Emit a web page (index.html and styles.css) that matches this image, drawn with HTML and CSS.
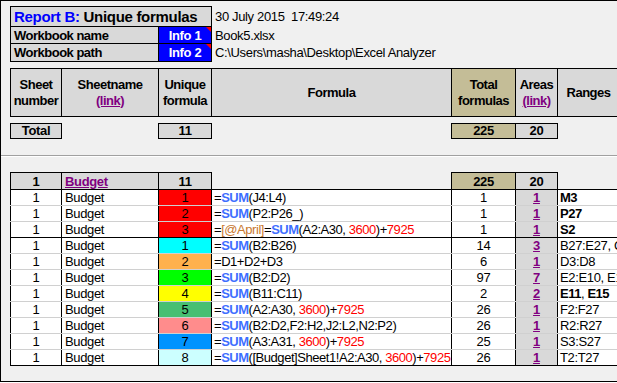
FILE: index.html
```html
<!DOCTYPE html>
<html lang="en">
  <head>
    <meta charset="UTF-8" />
    <link rel="stylesheet" href="styles.css">
  </head>
  <body>
    <div class="sheet">
      <table class="info">
        <colgroup>
          <col class="c-label" />
          <col class="c-info" />
          <col class="c-rest" />
        </colgroup>
        <tr class="row-title">
          <td class="title" colspan="2"><span class="report">Report B:</span> Unique formulas</td>
          <td class="plain">30 July 2015&nbsp; 17:49:24</td>
        </tr>
        <tr class="row-name">
          <td class="label">Workbook name</td>
          <td class="tag">Info 1<span class="note"></span></td>
          <td class="plain">Book5.xlsx</td>
        </tr>
        <tr class="row-path">
          <td class="label">Workbook path</td>
          <td class="tag">Info 2<span class="note"></span></td>
          <td class="plain">C:\Users\masha\Desktop\Excel Analyzer</td>
        </tr>
      </table>

      <table class="grid head">
        <colgroup>
          <col class="c1" /><col class="c2" /><col class="c3" /><col class="c4" /><col class="c5" /><col class="c6" /><col class="c7" />
        </colgroup>
        <tr>
          <td>Sheet<br />number</td>
          <td>Sheetname<br /><a href="#">(link)</a></td>
          <td>Unique<br />formula</td>
          <td>Formula</td>
          <td class="tan">Total<br />formulas</td>
          <td>Areas<br /><a href="#">(link)</a></td>
          <td>Ranges</td>
        </tr>
      </table>

      <table class="grid totals">
        <colgroup>
          <col class="c1" /><col class="c2" /><col class="c3" /><col class="c4" /><col class="c5" /><col class="c6" /><col class="c7" />
        </colgroup>
        <tr>
          <td class="box">Total</td>
          <td></td>
          <td class="box">11</td>
          <td></td>
          <td class="box tan">225</td>
          <td class="box">20</td>
          <td></td>
        </tr>
      </table>

      <div class="split"></div>

      <table class="grid data">
        <colgroup>
          <col class="c1" /><col class="c2" /><col class="c3" /><col class="c4" /><col class="c5" /><col class="c6" /><col class="c7" />
        </colgroup>
        <tr class="group">
          <td class="box">1</td>
          <td class="box name"><a href="#">Budget</a></td>
          <td class="box">11</td>
          <td class="open"></td>
          <td class="box tan">225</td>
          <td class="box">20</td>
          <td class="open last"></td>
        </tr>
        <tr>
          <td>1</td><td class="name">Budget</td><td class="u red">1</td>
          <td class="f">=<b class="fn">SUM</b>(J4:L4)</td>
          <td>1</td><td class="area"><a href="#">1</a></td><td class="rng"><b>M3</b></td>
        </tr>
        <tr>
          <td>1</td><td class="name">Budget</td><td class="u red">2</td>
          <td class="f">=<b class="fn">SUM</b>(P2:P26_)</td>
          <td>1</td><td class="area"><a href="#">1</a></td><td class="rng"><b>P27</b></td>
        </tr>
        <tr class="end">
          <td>1</td><td class="name">Budget</td><td class="u red">3</td>
          <td class="f">=<span class="col">[@April]</span>=<b class="fn">SUM</b>(A2:A30, <span class="num">3600</span>)+<span class="num">7925</span></td>
          <td>1</td><td class="area"><a href="#">1</a></td><td class="rng"><b>S2</b></td>
        </tr>
        <tr>
          <td>1</td><td class="name">Budget</td><td class="u cyan">1</td>
          <td class="f">=<b class="fn">SUM</b>(B2:B26)</td>
          <td>14</td><td class="area"><a href="#">3</a></td><td class="rng">B27:E27, C2:C26</td>
        </tr>
        <tr>
          <td>1</td><td class="name">Budget</td><td class="u orange">2</td>
          <td class="f">=D1+D2+D3</td>
          <td>6</td><td class="area"><a href="#">1</a></td><td class="rng">D3:D8</td>
        </tr>
        <tr>
          <td>1</td><td class="name">Budget</td><td class="u green">3</td>
          <td class="f">=<b class="fn">SUM</b>(B2:D2)</td>
          <td>97</td><td class="area"><a href="#">7</a></td><td class="rng">E2:E10, E12:E14</td>
        </tr>
        <tr>
          <td>1</td><td class="name">Budget</td><td class="u yellow">4</td>
          <td class="f">=<b class="fn">SUM</b>(B11:C11)</td>
          <td>2</td><td class="area"><a href="#">2</a></td><td class="rng"><b>E11</b>, <b>E15</b></td>
        </tr>
        <tr>
          <td>1</td><td class="name">Budget</td><td class="u sea">5</td>
          <td class="f">=<b class="fn">SUM</b>(A2:A30, <span class="num">3600</span>)+<span class="num">7925</span></td>
          <td>26</td><td class="area"><a href="#">1</a></td><td class="rng">F2:F27</td>
        </tr>
        <tr>
          <td>1</td><td class="name">Budget</td><td class="u pink">6</td>
          <td class="f">=<b class="fn">SUM</b>(B2:D2,F2:H2,J2:L2,N2:P2)</td>
          <td>26</td><td class="area"><a href="#">1</a></td><td class="rng">R2:R27</td>
        </tr>
        <tr>
          <td>1</td><td class="name">Budget</td><td class="u blue">7</td>
          <td class="f">=<b class="fn">SUM</b>(A3:A31, <span class="num">3600</span>)+<span class="num">7925</span></td>
          <td>25</td><td class="area"><a href="#">1</a></td><td class="rng">S3:S27</td>
        </tr>
        <tr>
          <td>1</td><td class="name">Budget</td><td class="u ice">8</td>
          <td class="f">=<b class="fn">SUM</b>([Budget]Sheet1!A2:A30, <span class="num">3600</span>)+<span class="num">7925</span></td>
          <td>26</td><td class="area"><a href="#">1</a></td><td class="rng">T2:T27</td>
        </tr>
      </table>
    </div>
  </body>
</html>
```

FILE: styles.css
```css
body {
  margin: 0;
  font-family: "Liberation Sans", Arial, sans-serif;
  font-size: 13px;
  letter-spacing: -0.35px;
  color: #000;
}
.sheet {
  height: 380px;
  border: 1px solid #000;
  border-right: none;
  background-color: #f0f0f0;
  overflow: hidden;
}
table {
  border-collapse: collapse;
  table-layout: fixed;
}
td {
  padding: 0;
  white-space: nowrap;
  overflow: hidden;
}
b {
  letter-spacing: -0.5px;
}
a {
  color: #800080;
}

/* top block */
.info {
  margin: 5px 0 0 9px;
  width: 400px;
}
.info .c-label {
  width: 148px;
}
.info .c-info {
  width: 53px;
}
.info td {
  border: 1px solid #000;
  padding: 0 3px;
}
.info td.plain {
  border: none;
  padding-left: 3px;
  overflow: visible;
}
.info .row-title td {
  height: 19px;
}
.info .row-name td {
  height: 16px;
}
.info .row-path td {
  height: 17px;
}
.info .title {
  background-color: #d9d9d9;
  font-size: 15px;
  font-weight: bold;
  letter-spacing: -0.3px;
}
.info .title .report {
  color: #0000ff;
}
.info .label {
  background-color: #d9d9d9;
  font-weight: bold;
  letter-spacing: -0.5px;
}
.info .tag {
  position: relative;
  background-color: #0000ff;
  color: #fff;
  font-weight: bold;
  text-align: center;
}
.info .tag .note {
  position: absolute;
  top: 0;
  right: 0;
  border-top: 5px solid #ff0000;
  border-left: 5px solid transparent;
}

/* column grid */
.grid {
  margin-left: 9px;
  width: 609px;
}
.grid .c1 { width: 51px; }
.grid .c2 { width: 97px; }
.grid .c3 { width: 53px; }
.grid .c4 { width: 240px; }
.grid .c5 { width: 64px; }
.grid .c6 { width: 42px; }
.grid .c7 { width: 62px; }

.grid td {
  text-align: center;
}
.tan {
  background-color: #c4bd97;
}

.head {
  margin-top: 6px;
}
.head td {
  height: 47px;
  border: 1px solid #000;
  background-color: #d9d9d9;
  font-weight: bold;
  letter-spacing: -0.5px;
  line-height: 16px;
}
.head td.tan {
  background-color: #c4bd97;
}

.totals {
  margin-top: 6px;
}
.totals td {
  height: 14px;
  line-height: 14px;
  font-weight: bold;
}
.totals td.box {
  border: 1px solid #000;
  background-color: #d9d9d9;
}
.totals td.tan {
  background-color: #c4bd97;
}

.split {
  margin-top: 16px;
  height: 1px;
  border-top: 1px solid #a0a0a0;
  background-color: #fff;
}

/* data rows */
.data {
  margin-top: 15px;
}
.data td {
  height: 15px;
  line-height: 15px;
  background-color: #fff;
  border-left: 1px solid #000;
  border-right: 1px solid #000;
  border-bottom: 1px solid #d0d0d0;
}
.data tr:last-child td {
  border-bottom: 1px solid #000;
}
.data tr.end td {
  border-bottom: 1px solid #000;
}
.data .group td {
  height: 16px;
  font-weight: bold;
  border: 1px solid #000;
  background-color: #d9d9d9;
}
.data .group td.tan {
  background-color: #c4bd97;
}
.data .group td.open {
  background-color: transparent;
  border-top: none;
}
.data .group td.last {
  border-right: none;
}
.data .name {
  text-align: left;
  padding-left: 3px;
}
.data .f {
  text-align: left;
  padding-left: 2px;
  letter-spacing: -0.45px;
}
.data .rng {
  text-align: left;
  padding-left: 2px;
}
.data .area {
  background-color: #d9d9d9;
  font-weight: bold;
}
.fn {
  color: #3f6fff;
}
.num {
  color: #ff0000;
}
.col {
  color: #c8782f;
}

/* unique formula colours */
.data .red { background-color: #ff0000; }
.data .cyan { background-color: #00ffff; }
.data .orange { background-color: #ffb14d; }
.data .green { background-color: #00ff00; }
.data .yellow { background-color: #ffff00; }
.data .sea { background-color: #47bf72; }
.data .pink { background-color: #ff8c8c; }
.data .blue { background-color: #0093ff; }
.data .ice { background-color: #ccffff; }
```
